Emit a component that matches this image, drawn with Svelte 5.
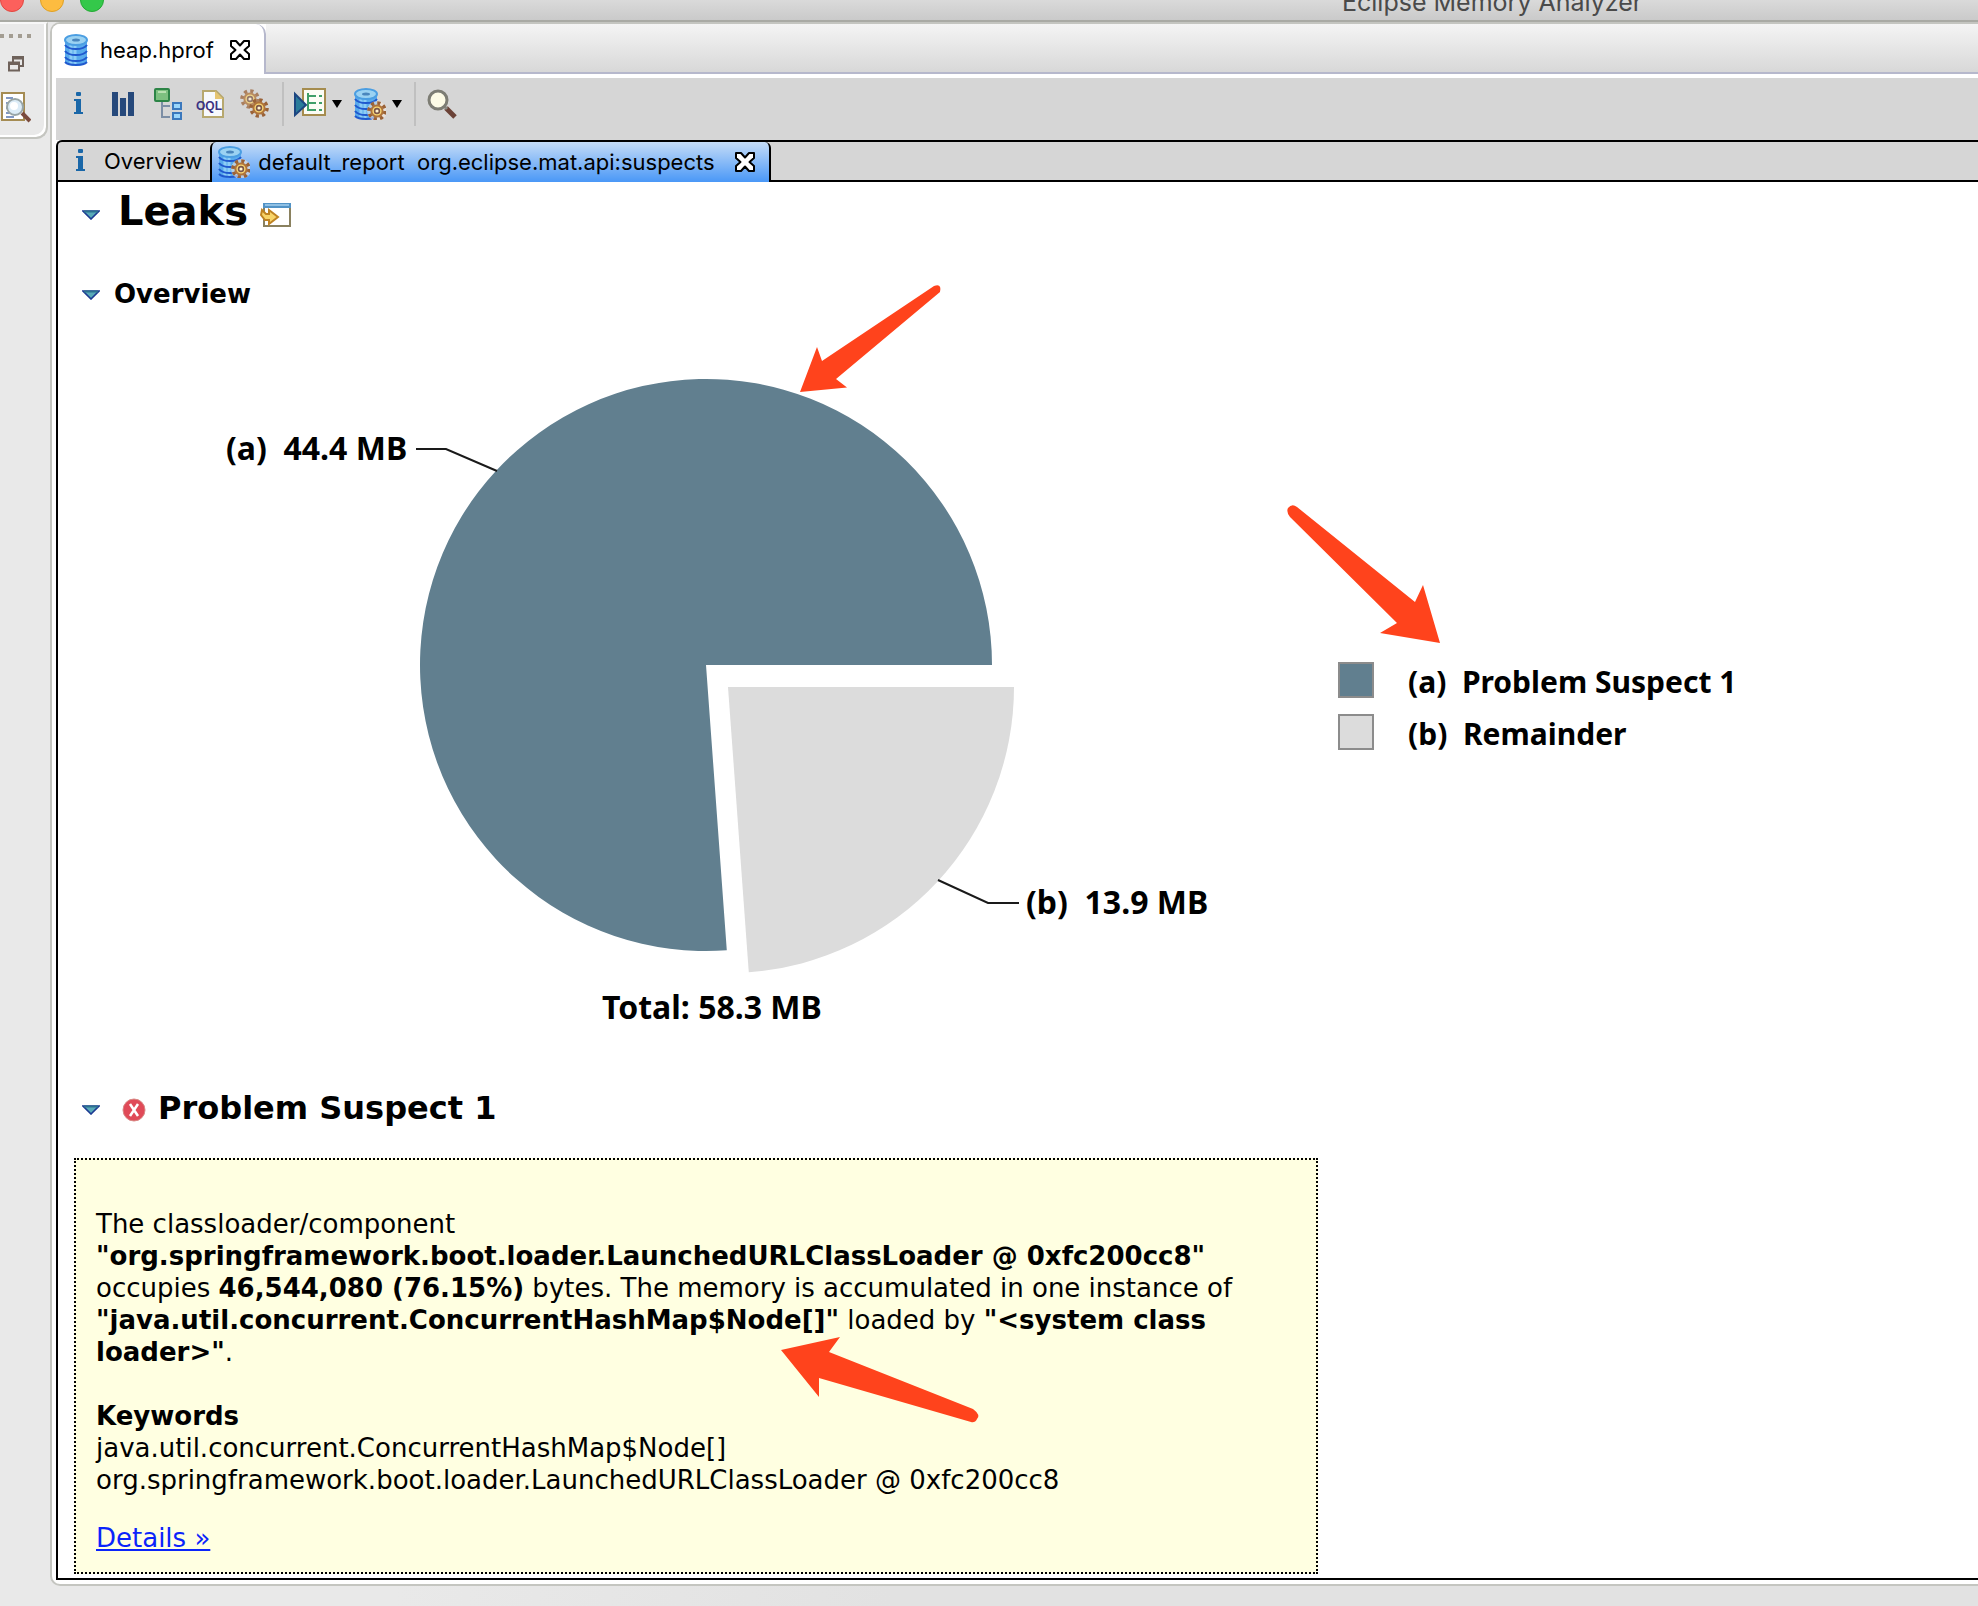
<script lang="ts">
  const cx = 500;
  const cy = 335;
  const radius = 286;
  const suspect = 44.4;
  const remainder = 13.9;
  const angle = (remainder / (suspect + remainder)) * 2 * Math.PI;
  const dx = radius * Math.cos(angle);
  const dy = radius * Math.sin(angle);
  const ex = cx + 22;
  const ey = cy + 22;
  const sliceA = `M${cx} ${cy}L${cx + dx} ${cy + dy}A${radius} ${radius} 0 1 1 ${cx + radius} ${cy}Z`;
  const sliceB = `M${ex} ${ey}L${ex + radius} ${ey}A${radius} ${radius} 0 0 1 ${ex + dx} ${ey + dy}Z`;
  const labelA = '(a)\u00a0 44.4 MB';
  const labelB = '(b)\u00a0 13.9 MB';
  const legend = [
    { key: 'suspect', label: '(a)\u00a0 Problem Suspect 1' },
    { key: 'rest', label: '(b)\u00a0 Remainder' },
  ];
</script>

{#snippet disks()}
  <path d="M1 5v23q3 4 11 4t11-4V5z" fill="#58aaec" />
  <path d="M7 7v24M11 8v24" stroke="#8ccdf6" stroke-width="3" />
  <ellipse cx="12" cy="6" rx="11" ry="5" fill="#9bd2f2" stroke="#4b9ee2" stroke-width="2" />
  <ellipse cx="12" cy="6" rx="4" ry="1.6" fill="#4a86bd" />
  <path d="M1 11q3 4 11 4t11-4M1 17q3 4 11 4t11-4M1 23q3 4 11 4t11-4M1 28q3 3 11 3t11-3" fill="none" stroke="#2059ce" stroke-width="2" />
{/snippet}

{#snippet gear(x: number, y: number)}
  <circle cx={x} cy={y} r="8" fill="none" stroke="#9a6238" stroke-width="3.6" stroke-dasharray="3.2 3.08" />
  <circle cx={x} cy={y} r="5.600" fill="#f9d775" stroke="#b0743a" stroke-width="2" />
  <circle cx={x} cy={y} r="2.400" fill="#fff3cf" stroke="#7b5649" stroke-width="1.600" />
{/snippet}

{#snippet database()}
  <svg class="db" viewBox="0 0 24 33" aria-hidden="true">{@render disks()}</svg>
{/snippet}

{#snippet databaseGear()}
  <svg class="icon" viewBox="0 0 32 32" aria-hidden="true">
    <g>{@render disks()}</g>
    <circle cx="23" cy="23" r="10" fill="#f3e6dc" opacity=".6" />
    {@render gear(23, 23)}
  </svg>
{/snippet}

{#snippet info()}
  <svg class="icon" viewBox="0 0 32 32" aria-hidden="true">
    <g fill="#1a67a8"><rect x="14" y="4" width="5" height="4" rx="1" /><path d="M12 11h7v13h2v2H12v-2h2V13h-2z" /></g>
  </svg>
{/snippet}

{#snippet close()}
  <svg class="close" viewBox="0 0 20 20" aria-hidden="true">
    <path d="M1 1h5l4 4.500 4-4.500h5v5l-4.500 4 4.500 4v5h-5l-4-4.500-4 4.500H1v-5l4.500-4L1 6z" fill="#fff" stroke="#000" stroke-width="2" stroke-linejoin="round" />
  </svg>
{/snippet}

{#snippet twisty()}
  <svg class="twisty" viewBox="0 0 18 10" aria-hidden="true">
    <path d="M1 1h16L9 9z" fill="#58aab8" stroke="#1c3b92" stroke-width="1.600" />
    <path d="M2 1.500h14" stroke="#2c7191" stroke-width="2" />
  </svg>
{/snippet}

<div class="window">
  <header class="titlebar">
    <div class="lights">
      <button class="light red" aria-label="Close window"></button>
      <button class="light yellow" aria-label="Minimize window"></button>
      <button class="light green" aria-label="Zoom window"></button>
    </div>
    <div class="title">Eclipse Memory Analyzer</div>
  </header>

  <div class="workbench">
    <aside class="trim">
      <div class="trim-box">
        <div class="grip"><i></i><i></i><i></i><i></i></div>
        <button class="plain" aria-label="Restore">
          <svg width="16" height="16" viewBox="0 0 16 16"><path d="M5 6V1h10v9h-4M1 6.500h10v8H1z" fill="none" stroke="#6f625b" stroke-width="2" /><path d="M5 2h10M1 7.500h10" stroke="#6f625b" stroke-width="3" /></svg>
        </button>
        <button class="plain" aria-label="Inspector">
          <svg width="30" height="32" viewBox="0 0 30 32">
            <path d="M1 2h22v27H1z" fill="#fff" stroke="#a58c53" stroke-width="2" />
            <path d="M5 7h7M5 12h5M5 17h3M5 22h5M5 26h8" stroke="#8198c4" stroke-width="2" />
            <path d="M21 22l8 8" stroke="#7b4b3d" stroke-width="4" />
            <circle cx="14" cy="16" r="8" fill="#dcecf7" stroke="#98a5a7" stroke-width="2" />
            <circle cx="13" cy="15" r="4" fill="#fff" />
          </svg>
        </button>
      </div>
    </aside>

    <main class="editor">
      <div class="tabs">
        <button class="tab">{@render database()}<span>heap.hprof</span>{@render close()}</button>
        <div class="tabs-rest"></div>
      </div>

      <div class="pane">
        <div class="toolbar">
          <button class="plain" aria-label="Overview">{@render info()}</button>
          <button class="plain" aria-label="Histogram">
            <svg class="icon" viewBox="0 0 32 32"><path d="M6 4h6v24H6zM14 10h6v18h-6zM22 4h6v24h-6z" fill="#26497b" /></svg>
          </button>
          <button class="plain" aria-label="Dominator tree">
            <svg class="icon" viewBox="0 0 32 32">
              <path d="M12 14v15h8M12 18h8" fill="none" stroke="#7c8ea5" stroke-width="2" />
              <rect x="5" y="1" width="14" height="12" rx="1" fill="#7cc07f" stroke="#2c8446" stroke-width="2" />
              <path d="M8 4h8" stroke="#b7e0b0" stroke-width="2" />
              <rect x="23" y="15" width="8" height="6" fill="#9bd6fb" stroke="#3b78bd" stroke-width="2" />
              <rect x="23" y="25" width="8" height="6" fill="#9bd6fb" stroke="#3b78bd" stroke-width="2" />
            </svg>
          </button>
          <button class="plain" aria-label="Object query language">
            <svg class="icon" viewBox="0 0 32 32">
              <path d="M9 3h13l7 7v19H9z" fill="#f7f9fd" stroke="#b7a86f" stroke-width="2" />
              <path d="M21 3v8h8z" fill="#e6c572" />
              <text class="oql" x="2" y="22">OQL</text>
            </svg>
          </button>
          <button class="plain" aria-label="Thread overview">
            <svg class="icon" viewBox="0 0 32 32"><g opacity=".75">{@render gear(12, 11)}</g>{@render gear(21, 20)}</svg>
          </button>
          <span class="divider"></span>
          <button class="plain menu" aria-label="Run expert system test">
            <svg class="icon" viewBox="0 0 32 32">
              <path d="M9 1h22v26H9z" fill="#fbfcf5" stroke="#a58c4e" stroke-width="2" />
              <path d="M14 5v18M14 8h8M14 15h8M14 22h8" fill="none" stroke="#3f9e68" stroke-width="2" />
              <path d="M25 8h3M25 15h3M25 22h3" stroke="#3f9e68" stroke-width="2" />
              <path d="M1 6v21l11-10z" fill="#2a7c9a" stroke="#1d4681" stroke-width="2" />
            </svg>
            <span class="arrow"></span>
          </button>
          <button class="plain menu" aria-label="Open query browser">{@render databaseGear()}<span class="arrow"></span></button>
          <span class="divider"></span>
          <button class="plain" aria-label="Find object by address">
            <svg class="icon" viewBox="0 0 32 32">
              <path d="M20 20l9 9" stroke="#6b4237" stroke-width="5" />
              <path d="M17 17l4 4" stroke="#8a8a83" stroke-width="3" />
              <circle cx="12" cy="12" r="9" fill="#fdfbe6" stroke="#7d7d74" stroke-width="3" />
            </svg>
          </button>
        </div>

        <div class="subtabs">
          <button class="subtab">{@render info()}<span>Overview</span></button>
          <button class="subtab active">{@render databaseGear()}<span>{'default_report\u00a0 org.eclipse.mat.api:suspects'}</span>{@render close()}</button>
          <div class="subtabs-rest"></div>
        </div>

        <article class="report">
          <h1>
            {@render twisty()}<span>Leaks</span>
            <svg class="open" viewBox="0 0 32 26" aria-hidden="true">
              <path d="M4 2h26v22H4z" fill="#fff" stroke="#8a815f" stroke-width="2" />
              <path d="M3 3.500h28" stroke="#5293c6" stroke-width="5" />
              <path d="M5 3h24" stroke="#8fc0e4" stroke-width="2" />
              <path d="M2 8l4 4h3V8l9 7-9 7v-4H5l-4-5z" fill="#f8d469" stroke="#bf8323" stroke-width="2" />
            </svg>
          </h1>
          <h3>{@render twisty()}<span>Overview</span></h3>

          <figure>
            <svg class="pie" viewBox="0 0 1030 730" role="img" aria-label="Memory by leak suspect">
              <path class="suspect" d={sliceA} />
              <path class="rest" d={sliceB} />
              <path class="leader" d="M210 119h30l51 22M732 550l50 23h31" />
              <text x="20" y="130">{labelA}</text>
              <text x="820" y="584">{labelB}</text>
              <text x="396" y="689">Total: 58.3 MB</text>
            </svg>
            <ul class="legend">
              {#each legend as item}
                <li><i class={item.key}></i><span>{item.label}</span></li>
              {/each}
            </ul>
            <svg class="marks" width="1240" height="320" viewBox="0 0 1240 320" aria-hidden="true">
              <path d="M594 62l17-45 5 14L728-44q8-3 6 6L630 49l11 8.500z" />
              <path d="M1234 313l-17-58-8 17L1091 177q-5-4-9 1-2 4 2 9l107 106-17 10z" />
            </svg>
          </figure>

          <h2>
            {@render twisty()}
            <svg class="error" viewBox="0 0 24 24" aria-hidden="true">
              <circle cx="12" cy="12" r="11" fill="#e04a58" stroke="#d98a86" stroke-width="1" />
              <path d="M8 6l8 12M16 6L8 18" stroke="#fff" stroke-width="2.500" />
            </svg>
            <span>Problem Suspect 1</span>
          </h2>

          <section class="important">
            <p>The classloader/component <b>"org.springframework.boot.loader.LaunchedURLClassLoader @ 0xfc200cc8"</b> occupies <b>46,544,080 (76.15%)</b> bytes. The memory is accumulated in one instance of <b>"java.util.concurrent.ConcurrentHashMap$Node[]"</b> loaded by <b>"&lt;system class loader&gt;"</b>.</p>
            <p><b>Keywords</b><br />java.util.concurrent.ConcurrentHashMap$Node[]<br />org.springframework.boot.loader.LaunchedURLClassLoader @ 0xfc200cc8</p>
            <p class="more"><a href="#details">Details »</a></p>
            <svg class="marks pointer" width="200" height="90" viewBox="0 0 200 90" aria-hidden="true">
              <path d="M1 14L60 1 49 16l144 57q8 6 4 10-2 4-6 3L39 42v19z" />
            </svg>
          </section>
        </article>
      </div>
    </main>
  </div>
</div>

<style>
  :global(body) {
    margin: 0;
  }
  :global(*) {
    box-sizing: border-box;
  }
  .window {
    display: flex;
    flex-direction: column;
    min-height: 100vh;
    background: linear-gradient(90deg, #e9e9e9 20%, #e2e2e2 45%);
    color: #000;
    font: 22px/28px Inter, 'Liberation Sans', sans-serif;
  }
  button {
    font: inherit;
    color: inherit;
    border: 0;
    padding: 0;
    background: none;
  }
  svg {
    display: block;
    flex: none;
  }
  .titlebar {
    display: flex;
    align-items: flex-end;
    height: 22px;
    background: linear-gradient(#dadada, #cacaca);
    border-bottom: 2px solid #a9aaa4;
    overflow: hidden;
  }
  .lights {
    display: flex;
    gap: 16px;
    padding-bottom: 8px;
    flex: none;
  }
  .light {
    width: 24px;
    height: 24px;
    border-radius: 50%;
  }
  .red {
    background: #fc605c;
    border: 1px solid #e2463f;
  }
  .yellow {
    background: #fdbc40;
    border: 1px solid #dfa023;
  }
  .green {
    background: #34c84a;
    border: 1px solid #24a934;
  }
  .title {
    flex: 1;
    padding: 0 0 4px 1238px;
    color: #4a4a4a;
    font-size: 25px;
    line-height: 28px;
    white-space: nowrap;
  }
  .workbench {
    display: flex;
    flex: 1;
    padding-bottom: 20px;
  }
  .trim {
    flex: none;
    width: 50px;
    background: #e9e9e9;
  }
  .trim-box {
    display: flex;
    flex-direction: column;
    align-items: flex-start;
    width: 48px;
    height: 117px;
    border: 2px solid #c4c5c0;
    border-left: 0;
    border-top-color: #f7f7f7;
    border-radius: 0 0 12px 0;
    box-shadow: inset -2px -2px #fff;
  }
  .grip {
    display: flex;
    gap: 5px;
    padding: 10px 0 18px;
  }
  .grip i {
    width: 4px;
    height: 4px;
    background: #a39d92;
  }
  .trim-box .plain:first-of-type {
    padding: 0 8px;
    margin-bottom: 19px;
  }
  .trim-box .plain:last-of-type {
    padding-left: 1px;
  }
  .editor {
    display: flex;
    flex-direction: column;
    flex: 1;
    min-width: 0;
    background: #fff;
    border: 2px solid #c4c5c0;
    border-right: 0;
    border-radius: 10px 0 0 10px;
    overflow: hidden;
  }
  .tabs {
    display: flex;
    height: 50px;
  }
  .tab {
    display: flex;
    align-items: center;
    gap: 12px;
    padding: 2px 14px 0 12px;
    height: 50px;
    border-right: 2px solid #b6b8cc;
    border-radius: 0 10px 0 0;
    background: #fff;
  }
  .tab .close {
    margin-left: 4px;
  }
  .tabs-rest {
    flex: 1;
    background: linear-gradient(#f4f4f4, #d8d8d8);
    border-bottom: 2px solid #b6b8cc;
  }
  .db {
    width: 24px;
    height: 33px;
  }
  .icon {
    width: 32px;
    height: 32px;
  }
  .close {
    width: 20px;
    height: 20px;
  }
  .pane {
    display: flex;
    flex-direction: column;
    flex: 1;
    margin: 4px 0 4px 4px;
  }
  .toolbar {
    display: flex;
    align-items: flex-start;
    gap: 12px;
    height: 62px;
    padding: 10px 6px;
    background: #d6d6d6;
  }
  .menu {
    display: flex;
    align-items: center;
    gap: 6px;
  }
  .divider {
    width: 2px;
    height: 44px;
    margin: -6px -2px 0 0;
    background: #c0c0c0;
  }
  .arrow {
    border: 5px solid transparent;
    border-top: 8px solid #000;
    border-bottom: 0;
  }
  .oql {
    font: bold 12px 'Liberation Sans', sans-serif;
    fill: #3c3382;
  }
  .subtabs {
    display: flex;
    height: 42px;
    background: #d6d6d6;
    border-top: 2px solid #000;
    border-left: 2px solid #000;
    border-top-left-radius: 6px;
  }
  .subtab {
    display: flex;
    align-items: center;
    gap: 8px;
    padding: 0 8px 0 6px;
    border-bottom: 2px solid #000;
    white-space: nowrap;
  }
  .active {
    padding: 0 14px 0 6px;
    border: 2px solid #000;
    border-width: 0 2px 0 2px;
    border-radius: 6px 6px 0 0;
    background: linear-gradient(#c5dcf7, #4a98f7);
  }
  .active .close {
    margin-left: 12px;
  }
  .subtabs-rest {
    flex: 1;
    border-bottom: 2px solid #000;
  }
  .report {
    flex: 1;
    padding: 5px 16px 2px;
    border-left: 2px solid #000;
    border-bottom: 2px solid #000;
    font: 26px/32px 'DejaVu Sans', Verdana, sans-serif;
  }
  h1,
  h2,
  h3 {
    display: flex;
    align-items: center;
    gap: 12px;
    margin: 0;
    padding-left: 8px;
  }
  h1 {
    font-size: 40px;
    line-height: 48px;
  }
  h1 svg {
    margin-top: 8px;
  }
  h1 .twisty {
    margin-right: 6px;
  }
  h3 {
    gap: 14px;
    margin-top: 43px;
    font-size: 26px;
    line-height: 32px;
  }
  h3 .twisty {
    margin-top: 2px;
  }
  h2 {
    font-size: 32px;
    line-height: 40px;
  }
  h2 svg {
    margin-top: 4px;
  }
  .twisty {
    width: 18px;
    height: 10px;
  }
  .open {
    width: 32px;
    height: 26px;
  }
  .error {
    width: 24px;
    height: 24px;
    margin-left: 10px;
  }
  figure {
    position: relative;
    display: flex;
    align-items: flex-start;
    gap: 102px;
    margin: 20px 0 28px 132px;
    font: bold 32px/36px 'Noto Sans', sans-serif;
    white-space: nowrap;
  }
  .pie {
    width: 1030px;
    height: 730px;
  }
  .suspect {
    fill: #617f8f;
    background: #617f8f;
  }
  .rest {
    fill: #dcdcdc;
    background: #dcdcdc;
  }
  .leader {
    fill: none;
    stroke: #1a1a1a;
    stroke-width: 2;
  }
  .legend {
    display: grid;
    gap: 14px;
    margin: 0;
    padding: 332px 0 0;
    list-style: none;
    font-size: 30px;
  }
  li {
    display: flex;
    gap: 34px;
  }
  li span {
    padding-top: 2px;
  }
  li i {
    width: 36px;
    height: 36px;
    border: 2px solid #8c8c8c;
  }
  .marks {
    position: absolute;
    left: 0;
    top: 0;
    overflow: visible;
    fill: #ff431c;
    pointer-events: none;
  }
  .important {
    position: relative;
    width: 1244px;
    max-width: 100%;
    margin-top: 30px;
    padding: 48px 20px 18px;
    border: 2px dotted #000;
    background: #ffffe1;
  }
  .marks.pointer {
    left: 704px;
    top: 176px;
  }
  p {
    margin: 0 0 32px;
  }
  .important .more {
    margin: -6px 0 0;
  }
  a {
    color: #0b24fb;
  }
</style>
